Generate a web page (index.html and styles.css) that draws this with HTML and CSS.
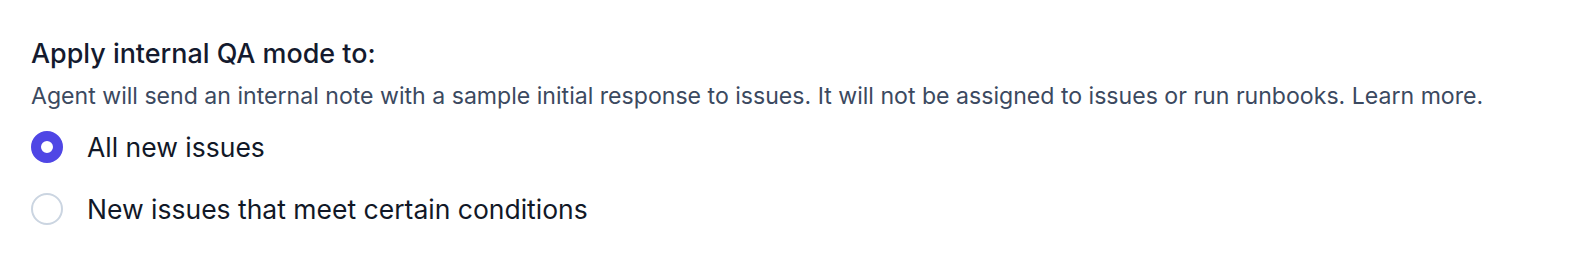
FILE: index.html
```html
<!DOCTYPE html>
<html>
<head>
<meta charset="utf-8">
<link rel="stylesheet" href="styles.css">
</head>
<body>
<section class="qa">
  <h2 class="title">Apply internal QA mode to:</h2>
  <p class="desc">Agent will send an internal note with a sample initial response to issues. It will not be assigned to issues or run runbooks. Learn more.</p>
  <div class="options">
    <label class="option">
      <span class="radio checked"></span>
      <span class="label">All new issues</span>
    </label>
    <label class="option">
      <span class="radio"></span>
      <span class="label">New issues that meet certain conditions</span>
    </label>
  </div>
</section>
</body>
</html>
```
FILE: styles.css
```css
html, body {
  margin: 0;
  padding: 0;
  background: #ffffff;
}
body {
  font-family: Inter, "Noto Sans", sans-serif;
  color: #0f172a;
}
.qa {
  padding: 37px 31px 0 31px;
}
.title {
  margin: 0;
  font-size: 26.9px;
  font-weight: 500;
  line-height: 32px;
  color: #141a2e;
}
.desc {
  margin: 13px 0 0 0;
  font-size: 23.1px;
  line-height: 28px;
  color: #3b4960;
}
.options {
  display: flex;
  flex-direction: column;
  gap: 30px;
  margin-top: 21px;
}
.option {
  display: flex;
  align-items: center;
  gap: 24px;
  height: 32px;
}
.radio {
  box-sizing: border-box;
  width: 32px;
  height: 32px;
  border-radius: 50%;
  border: 2px solid #cbd5e1;
  background: #fff;
  flex: none;
}
.radio.checked {
  border: 10px solid #4f46e5;
}
.label {
  font-size: 26.5px;
  line-height: 32px;
  color: #111827;
}
```
